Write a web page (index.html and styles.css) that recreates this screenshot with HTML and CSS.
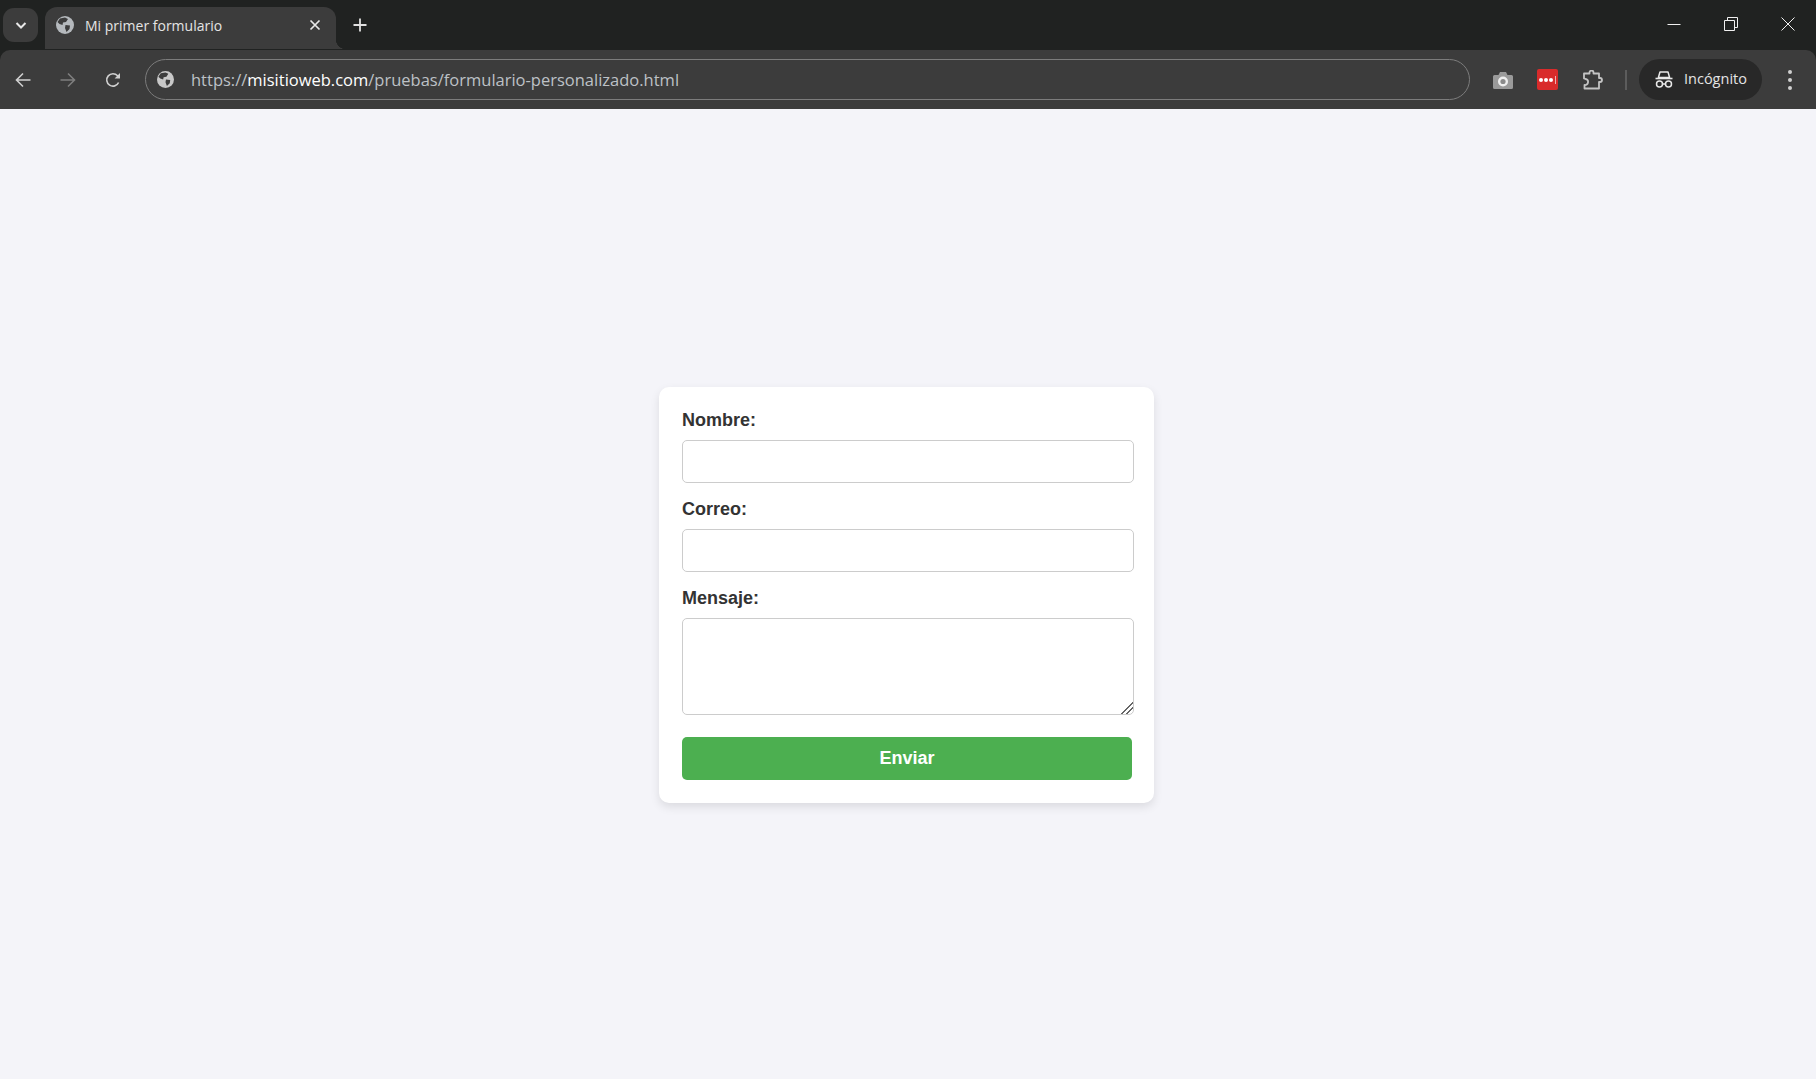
FILE: index.html
```html
<!DOCTYPE html>
<html lang="es">
<head>
    <meta charset="UTF-8">
    <meta name="viewport" content="width=device-width, initial-scale=1.0">
    <title>Mi primer formulario</title>
    <link rel="stylesheet" href="styles.css">
</head>
<body>

    <header class="browser">
        <div class="tabstrip">
            <div class="tab-search">
                <svg width="14" height="14" viewBox="0 0 14 14"><path d="M2.5 5 L7 9.5 L11.5 5" fill="none" stroke="#e8e8e8" stroke-width="2"/></svg>
            </div>
            <div class="tab">
                <svg class="tab-globe" width="18" height="18" viewBox="0 0 18 18">
                    <circle cx="9" cy="9" r="9" fill="#b5b9bd"/>
                    <path d="M4 2.5 L9 1.5 L12 3 L10 6 L7 6.5 L6.5 9 L3.5 8 L1.5 6 Z M9.5 9 L14 9.5 L13.5 13 L10.5 16 L9 12 Z" fill="#3c3c3c"/>
                </svg>
                <span class="tab-title">Mi primer formulario</span>
                <svg class="tab-close" width="12" height="12" viewBox="0 0 12 12"><path d="M1.5 1.5 L10.5 10.5 M10.5 1.5 L1.5 10.5" stroke="#e8e8e8" stroke-width="1.7"/></svg>
            </div>
            <svg class="new-tab" width="14" height="14" viewBox="0 0 14 14"><path d="M7 0.5 V13.5 M0.5 7 H13.5" stroke="#e0e0e0" stroke-width="1.8"/></svg>
            <div class="window-controls">
                <svg width="14" height="14" viewBox="0 0 14 14"><path d="M0.5 7.5 H13.5" stroke="#f0f0f0"/></svg>
                <svg width="14" height="14" viewBox="0 0 14 14"><path d="M0.5 3.5 H10.5 V13.5 H0.5 Z" fill="none" stroke="#f0f0f0"/><path d="M3.5 3 V0.5 H13.5 V10.5 H11" fill="none" stroke="#f0f0f0"/></svg>
                <svg width="14" height="14" viewBox="0 0 14 14"><path d="M0.5 0.5 L13.5 13.5 M13.5 0.5 L0.5 13.5" stroke="#f0f0f0"/></svg>
            </div>
        </div>

        <div class="toolbar">
            <div class="nav-buttons">
                <svg width="16" height="16" viewBox="0 0 16 16"><path d="M15.5 8 H1.5 M8 1.5 L1.5 8 L8 14.5" fill="none" stroke="#d0d0d0" stroke-width="1.6"/></svg>
                <svg width="16" height="16" viewBox="0 0 16 16"><path d="M0.5 8 H14.5 M8 1.5 L14.5 8 L8 14.5" fill="none" stroke="#7e7e7e" stroke-width="1.6"/></svg>
                <svg width="16" height="16" viewBox="0 0 16 16"><path d="M13.6 10.5 A6.2 6.2 0 1 1 12.6 3.8 L14.4 5.4" fill="none" stroke="#d0d0d0" stroke-width="1.6"/><path d="M15 1 V6.6 H9.6 Z" fill="#d0d0d0"/></svg>
            </div>
            <div class="address-bar">
                <svg width="17" height="17" viewBox="0 0 18 18">
                    <circle cx="9" cy="9" r="9" fill="#c8c8c8"/>
                    <path d="M4 2.5 L9 1.5 L12 3 L10 6 L7 6.5 L6.5 9 L3.5 8 L1.5 6 Z M9.5 9 L14 9.5 L13.5 13 L10.5 16 L9 12 Z" fill="#3c3c3c"/>
                </svg>
                <span class="url">https://<span class="url-host">misitioweb.com</span>/pruebas/formulario-personalizado.html</span>
            </div>
            <div class="toolbar-actions">
                <svg class="icon-camera" width="20" height="18" viewBox="0 0 20 18">
                    <path d="M1.5 4 H5.5 L7 1 H13 L14.5 4 H18.5 Q20 4 20 5.5 V16.5 Q20 18 18.5 18 H1.5 Q0 18 0 16.5 V5.5 Q0 4 1.5 4 Z" fill="#9a9a9a"/>
                    <circle cx="10" cy="10.5" r="5" fill="#eeeeee"/>
                    <circle cx="10" cy="10.5" r="2.6" fill="#8a8a8a"/>
                </svg>
                <div class="icon-pass">
                    <span class="pass-dot"></span><span class="pass-dot"></span><span class="pass-dot"></span><span class="pass-bar"></span>
                </div>
                <svg class="icon-puzzle" width="20" height="20" viewBox="0 0 20 20"><path d="M1 3.5 H6.5 V2.5 A2 2 0 0 1 10.5 2.5 V3.5 H16 V8 H17 A2 2 0 0 1 17 12 H16 V18.5 H1.5 V15 A3 3 0 0 0 2.5 9 L1 8.5 Z" fill="none" stroke="#c4c4c4" stroke-width="1.8" stroke-linejoin="round"/></svg>
                <span class="separator"></span>
                <div class="incognito">
                    <svg width="18" height="17" viewBox="0 0 18 17">
                        <path d="M5 1 H13 L14.6 6.5 H3.4 Z" fill="none" stroke="#e8e8e8" stroke-width="1.5" stroke-linejoin="round"/>
                        <path d="M0.5 7.5 H17.5" stroke="#e8e8e8" stroke-width="1.6"/>
                        <circle cx="4.5" cy="13" r="3" fill="none" stroke="#e8e8e8" stroke-width="1.5"/>
                        <circle cx="13.5" cy="13" r="3" fill="none" stroke="#e8e8e8" stroke-width="1.5"/>
                        <path d="M7.5 13 H10.5" stroke="#e8e8e8" stroke-width="1.5"/>
                    </svg>
                    <span class="incognito-label">Incógnito</span>
                </div>
                <div class="menu-dots"><span></span><span></span><span></span></div>
            </div>
        </div>
    </header>

    <main class="page">
        <form class="form-card">
            <label for="nombre">Nombre:</label>
            <input type="text" id="nombre">
            <label for="correo">Correo:</label>
            <input type="email" id="correo">
            <label for="mensaje">Mensaje:</label>
            <textarea id="mensaje"></textarea>
            <button type="button">Enviar</button>
        </form>
    </main>

</body>
</html>
```

FILE: styles.css
```css
* {
    box-sizing: border-box;
}
html, body {
    height: 100%;
}
body {
    margin: 0;
    display: flex;
    flex-direction: column;
    font-family: "Liberation Sans", Arial, sans-serif;
    background-color: #f4f4f9;
    overflow: hidden;
}

/* browser frame */
.browser {
    background-color: #202221;
    font-family: "Open Sans", "Noto Sans", sans-serif;
}
.tabstrip {
    height: 50px;
    display: flex;
    align-items: flex-start;
    padding: 8px 0 0 3px;
}
.tab-search {
    width: 35px;
    height: 34px;
    border-radius: 11px;
    background-color: #3c3c3c;
    display: flex;
    align-items: center;
    justify-content: center;
}
.tab {
    position: relative;
    width: 291px;
    height: 42px;
    margin: -1px 0 0 7px;
    padding: 0 15px 6px 11px;
    background-color: #3c3c3c;
    border-radius: 12px 12px 0 0;
    display: flex;
    align-items: center;
    color: #e4e4e4;
}
.tab::after {
    content: "";
    position: absolute;
    right: -10px;
    bottom: 0;
    width: 10px;
    height: 10px;
    background: radial-gradient(circle at 100% 0, transparent 10px, #3c3c3c 10.5px);
}
.tab-title {
    margin-left: 11px;
    flex: 1;
    font-size: 14px;
}
.new-tab {
    margin: 10px 0 0 17px;
}
.window-controls {
    margin: 9px 21px 0 auto;
    display: flex;
    gap: 43px;
}
.toolbar {
    height: 59px;
    background-color: #3c3c3c;
    border-radius: 10px 10px 0 0;
    display: flex;
    align-items: center;
}
.nav-buttons {
    width: 145px;
    padding-left: 15px;
    display: flex;
    gap: 29px;
}
.address-bar {
    width: 1325px;
    height: 41px;
    padding-left: 11px;
    border: 1px solid #7c7c7c;
    border-radius: 21px;
    display: flex;
    align-items: center;
    gap: 17px;
}
.url {
    font-size: 16.5px;
    color: #bdc1c6;
}
.url-host {
    color: #ffffff;
}
.toolbar-actions {
    flex: 1;
    display: flex;
    align-items: center;
    padding-left: 23px;
}
.icon-pass {
    width: 21px;
    height: 21px;
    margin-left: 24px;
    border-radius: 2px;
    background-color: #d92b2b;
    display: flex;
    align-items: center;
    justify-content: center;
    gap: 1px;
}
.pass-dot {
    width: 4px;
    height: 4px;
    border-radius: 50%;
    background-color: #ffffff;
}
.pass-bar {
    width: 1px;
    height: 8px;
    margin-left: 1px;
    background-color: #f0b0b0;
}
.icon-puzzle {
    margin-left: 25px;
}
.separator {
    width: 2px;
    height: 20px;
    margin-left: 22px;
    background-color: #5c5c5c;
}
.incognito {
    width: 123px;
    height: 41px;
    margin-left: 12px;
    padding-left: 16px;
    border-radius: 21px;
    background-color: #282828;
    color: #e4e4e4;
    font-size: 14.5px;
    display: flex;
    align-items: center;
    gap: 11px;
}
.incognito-label {
    padding-bottom: 2px;
}
.menu-dots {
    margin-left: 26px;
    display: flex;
    flex-direction: column;
    gap: 4px;
}
.menu-dots span {
    width: 4px;
    height: 4px;
    border-radius: 50%;
    background-color: #d0d0d0;
}

/* page content */
.page {
    flex: 1;
    display: flex;
    align-items: center;
    justify-content: center;
    padding: 2px 3px 0 0;
}
.form-card {
    width: 495px;
    padding: 23px 22px 23px 23px;
    background-color: #fff;
    border-radius: 10px;
    box-shadow: 0 4px 10px rgba(0, 0, 0, 0.1);
}
label {
    display: block;
    margin-bottom: 9px;
    font-size: 18px;
    font-weight: bold;
    color: #333;
}
input, textarea {
    display: block;
    width: 452px;
    height: 43px;
    margin-bottom: 16px;
    border: 1px solid #ccc;
    border-radius: 5px;
    background-color: #fff;
}
textarea {
    height: 97px;
    margin-bottom: 22px;
}
textarea::-webkit-resizer {
    background: linear-gradient(135deg,
        transparent 58%, #666 58%, #666 65%, transparent 65%,
        transparent 76%, #666 76%, #666 83%, transparent 83%);
}
button {
    display: block;
    width: 100%;
    height: 43px;
    border: none;
    border-radius: 5px;
    background-color: #4caf50;
    color: white;
    font-family: inherit;
    font-size: 18px;
    font-weight: bold;
    cursor: pointer;
}
button:hover {
    background-color: #45a049;
}
```
